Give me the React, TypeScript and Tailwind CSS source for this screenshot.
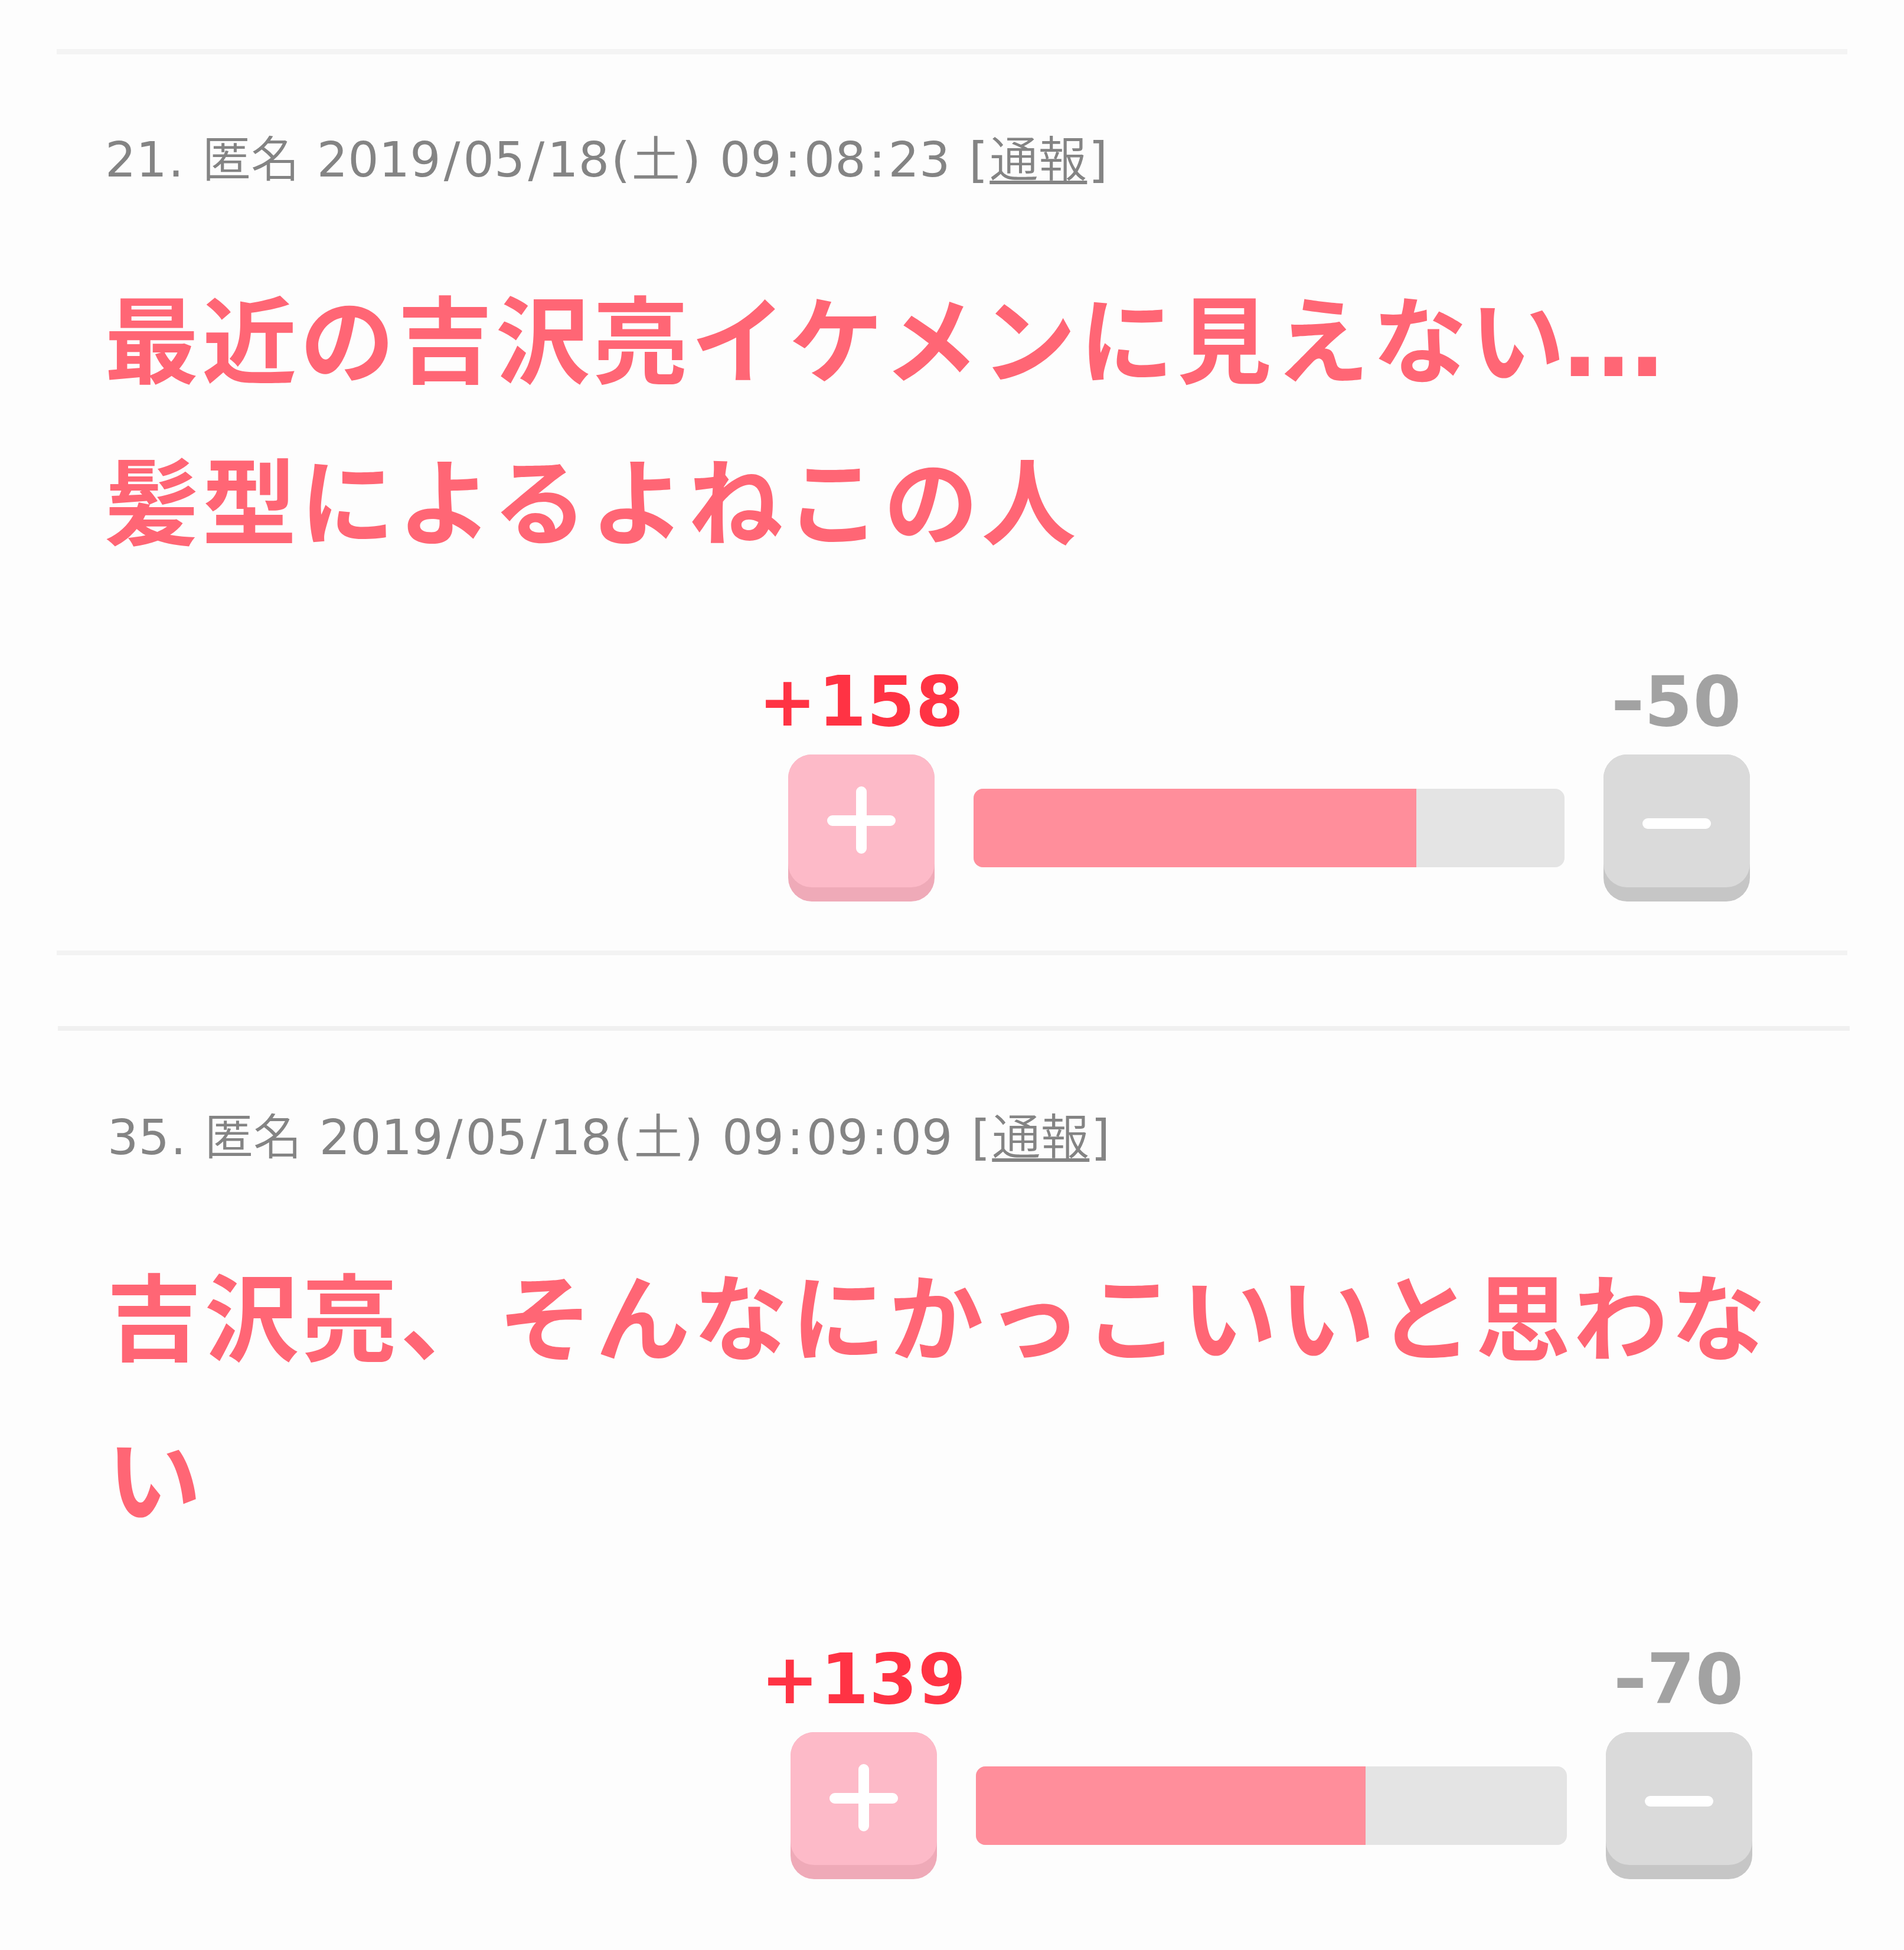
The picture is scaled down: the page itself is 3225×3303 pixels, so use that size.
import React from "react";

type Comment = {
  id: number;
  time: string;
  lines: React.ReactNode[];
  plus: number;
  minus: number;
  ratio: number;
};

const comments: Comment[] = [
  {
    id: 21,
    time: "09:08:23",
    lines: [
      <>
        最近の吉沢亮イケメンに見えない
        <span className="-ml-[9px] font-['DejaVu_Sans'] text-[1.07em] leading-none tracking-[8px]">…</span>
      </>,
      "髪型によるよねこの人",
    ],
    plus: 158,
    minus: 50,
    ratio: 74.9,
  },
  {
    id: 35,
    time: "09:09:09",
    lines: ["吉沢亮、そんなにかっこいいと思わな", "い"],
    plus: 139,
    minus: 70,
    ratio: 65.9,
  },
];

function Spaced({ text }: { text: string }) {
  return (
    <>
      {text.split(/([/:])/).map((part, i) =>
        part === "/" || part === ":" ? (
          <span key={i} className="mx-[0.0585em]">
            {part}
          </span>
        ) : (
          part
        ),
      )}
    </>
  );
}

function Jp({ children }: { children: React.ReactNode }) {
  return <span className="font-['Noto_Sans_CJK_JP'] font-[350] leading-none">{children}</span>;
}

function Meta({ id, time }: { id: number; time: string }) {
  return (
    <div className="h-[100px] whitespace-pre text-[82.3px] leading-[100px] tracking-[0.2px] text-[#848484] [word-spacing:0.034em]">
      {id}
      <span className="mx-[0.023em]">.</span> <Jp>匿名</Jp> <Spaced text="2019/05/18" />
      <span className="mx-[0.032em]">(</span>
      <Jp>土</Jp>
      <span className="mx-[0.032em]">)</span> <Spaced text={time} />{" "}
      <span className="mx-[0.032em]">[</span>
      <a className="underline decoration-[6px] underline-offset-[7px]">
        <Jp>通報</Jp>
      </a>
      <span className="mx-[0.032em]">]</span>
    </div>
  );
}

function VoteButton({ kind }: { kind: "plus" | "minus" }) {
  const plus = kind === "plus";
  return (
    <button
      aria-label={kind}
      className={
        plus
          ? "flex h-[249px] w-[248px] items-start rounded-[40px] bg-[#efaab8]"
          : "flex h-[249px] w-[248px] items-start rounded-[40px] bg-[#c6c6c6]"
      }
    >
      <span
        className={
          plus
            ? "block h-[225px] rounded-[40px] bg-[#fdbac8]"
            : "block h-[225px] rounded-[40px] bg-[#dadada]"
        }
      >
        <svg
          viewBox="0 0 248 225"
          className="block h-[225px] w-[248px]"
          fill="none"
          stroke="#fff"
          strokeWidth="18"
          strokeLinecap="round"
        >
          {plus ? <path d="M75 112H173M124 63V159" /> : <path d="M75 117H173" />}
        </svg>
      </span>
    </button>
  );
}

function Votes({ plus, minus, ratio }: { plus: number; minus: number; ratio: number }) {
  return (
    <div className="flex items-end justify-end pr-[165px] text-[117px] font-bold leading-[120px] tracking-[1px]">
      <div className="flex w-[248px] flex-col items-center gap-[29px]">
        <span className="whitespace-nowrap text-[#ff3344]">
          <span className="mr-[2px]">+</span>
          {plus}
        </span>
        <VoteButton kind="plus" />
      </div>
      <div className="mx-[66px] mb-[58px] h-[133px] w-[1001px] overflow-hidden rounded-[16px] bg-[#e4e4e4]">
        <div className="h-full bg-[#ff8e9b]" style={{ width: `${ratio}%` }} />
      </div>
      <div className="flex w-[248px] flex-col items-center gap-[29px]">
        <span className="whitespace-nowrap text-[#a2a2a2]">
          <span className="mx-[3px] inline-block scale-x-[1.2]">-</span>
          {minus}
        </span>
        <VoteButton kind="minus" />
      </div>
    </div>
  );
}

function ItemBody({ c }: { c: Comment }) {
  return (
    <>
      <div className="pl-[82px]">
        <Meta id={c.id} time={c.time} />
        <div className="-ml-px mt-[109px] h-[548px] whitespace-nowrap font-['Noto_Sans_CJK_JP'] text-[160px] font-bold leading-[274px] tracking-[5.6px] text-[#ff6675]">
          {c.lines.map((l, i) => (
            <p key={i} className="h-[274px]">
              {l}
            </p>
          ))}
        </div>
      </div>
      <div className="mt-[151px]">
        <Votes plus={c.plus} minus={c.minus} ratio={c.ratio} />
      </div>
    </>
  );
}

export default function App() {
  return (
    <main className="h-[3303px] w-[3225px] overflow-hidden bg-[#fdfdfd] pt-[83px] font-['DejaVu_Sans','Noto_Sans_CJK_JP',sans-serif]">
      <div className="flex flex-col gap-[120px]">
        <article className="ml-[96px] h-[1535px] w-[3033px] border-b-[8px] border-t-[9px] border-b-[#f3f3f3] border-t-[#f4f4f4] pt-[129px]">
          <ItemBody c={comments[0]} />
        </article>
        <article className="ml-[98px] w-[3035px] border-t-[8px] border-[#f0f0f0] pl-[2px] pt-[131px]">
          <ItemBody c={comments[1]} />
        </article>
      </div>
    </main>
  );
}
